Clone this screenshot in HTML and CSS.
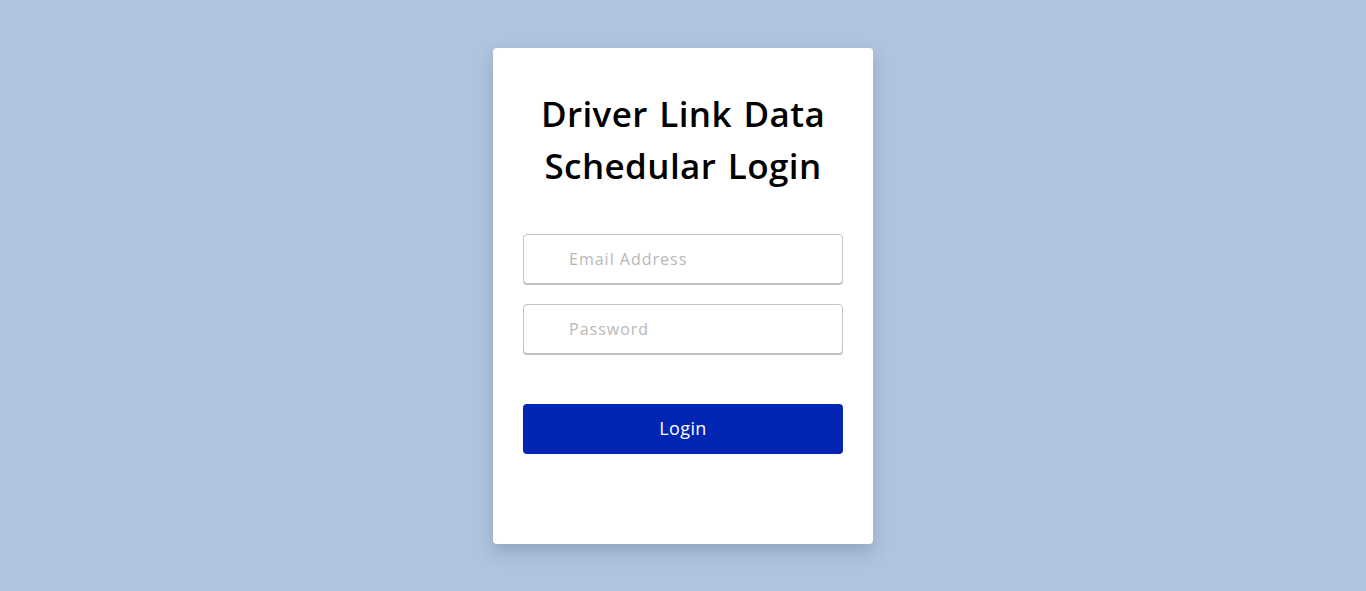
FILE: index.html
```html
<!DOCTYPE html>
<html lang="en">
<head>
<meta charset="utf-8">
<title>Driver Link Data Schedular Login</title>
<link rel="stylesheet" href="styles.css">
</head>
<body>
<main class="page">
  <form class="card">
    <h1 class="title">Driver Link Data Schedular Login</h1>
    <div class="fields">
      <input class="field" type="email" placeholder="Email Address">
      <input class="field" type="password" placeholder="Password">
    </div>
    <button class="btn" type="button">Login</button>
  </form>
</main>
</body>
</html>
```

FILE: styles.css
```css
* { box-sizing: border-box; }
html, body { margin: 0; height: 100%; }
body {
  background: #b0c4de;
  font-family: "Open Sans", "Liberation Sans", sans-serif;
}
.page {
  display: flex;
  justify-content: center;
  padding-top: 48px;
}
.card {
  width: 380px;
  height: 496px;
  background: #fff;
  border-radius: 4px;
  box-shadow: 0 8px 16px rgba(60, 80, 110, 0.25);
  padding: 40px 30px 0;
  display: flex;
  flex-direction: column;
}
.title {
  margin: 0 auto;
  width: 310px;
  text-align: center;
  font-size: 35px;
  letter-spacing: 0.4px;
  word-spacing: 2px;
  line-height: 52px;
  font-weight: 600;
  color: #000;
}
.fields {
  display: flex;
  flex-direction: column;
  gap: 20px;
  margin-top: 42px;
}
.field {
  width: 320px;
  height: 50px;
  border: 1px solid #c4c4c4;
  border-radius: 4px;
  box-shadow: 0 1px 0 #bdbdbd;
  padding: 0 0 0 45px;
  font-family: inherit;
  font-size: 16px;
  letter-spacing: 1px;
  color: #333;
  outline: none;
}
.field::placeholder { color: #b8b8b8; }
.btn {
  margin-top: 50px;
  width: 320px;
  height: 50px;
  border: 0;
  border-radius: 4px;
  background: #0325b3;
  color: #fff;
  font-family: inherit;
  font-size: 18px;
  letter-spacing: 0.4px;
  padding: 0 0 2px;
}
```
